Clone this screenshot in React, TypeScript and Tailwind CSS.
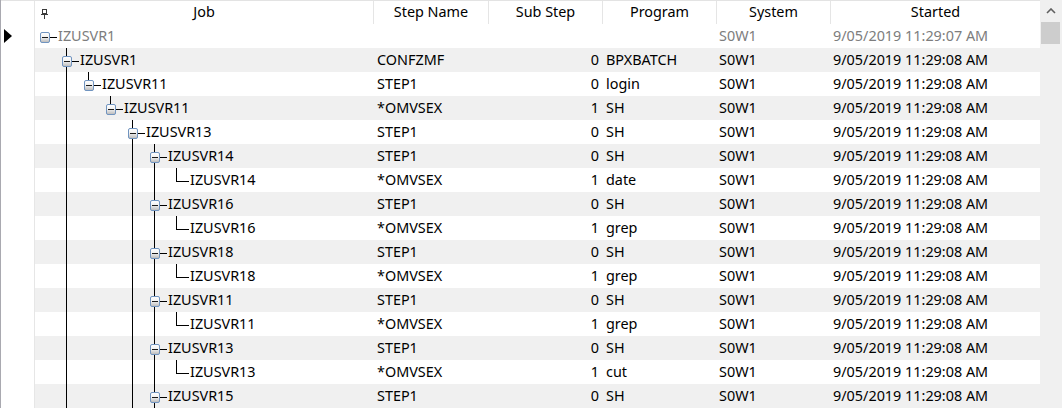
import React from "react";

type JobRow = {
  level: number;
  leaf?: boolean;
  more?: boolean; // has a sibling further down, below the visible rows
  dim?: boolean;
  name: string;
  step: string;
  sub: string;
  program: string;
  system: string;
  started: string;
};

const T8 = "9/05/2019 11:29:08 AM";

const rows: JobRow[] = [
  { level: 0, dim: true, name: "IZUSVR1", step: "", sub: "", program: "", system: "S0W1", started: "9/05/2019 11:29:07 AM" },
  { level: 1, more: true, name: "IZUSVR1", step: "CONFZMF", sub: "0", program: "BPXBATCH", system: "S0W1", started: T8 },
  { level: 2, name: "IZUSVR11", step: "STEP1", sub: "0", program: "login", system: "S0W1", started: T8 },
  { level: 3, name: "IZUSVR11", step: "*OMVSEX", sub: "1", program: "SH", system: "S0W1", started: T8 },
  { level: 4, more: true, name: "IZUSVR13", step: "STEP1", sub: "0", program: "SH", system: "S0W1", started: T8 },
  { level: 5, name: "IZUSVR14", step: "STEP1", sub: "0", program: "SH", system: "S0W1", started: T8 },
  { level: 6, leaf: true, name: "IZUSVR14", step: "*OMVSEX", sub: "1", program: "date", system: "S0W1", started: T8 },
  { level: 5, name: "IZUSVR16", step: "STEP1", sub: "0", program: "SH", system: "S0W1", started: T8 },
  { level: 6, leaf: true, name: "IZUSVR16", step: "*OMVSEX", sub: "1", program: "grep", system: "S0W1", started: T8 },
  { level: 5, name: "IZUSVR18", step: "STEP1", sub: "0", program: "SH", system: "S0W1", started: T8 },
  { level: 6, leaf: true, name: "IZUSVR18", step: "*OMVSEX", sub: "1", program: "grep", system: "S0W1", started: T8 },
  { level: 5, name: "IZUSVR11", step: "STEP1", sub: "0", program: "SH", system: "S0W1", started: T8 },
  { level: 6, leaf: true, name: "IZUSVR11", step: "*OMVSEX", sub: "1", program: "grep", system: "S0W1", started: T8 },
  { level: 5, name: "IZUSVR13", step: "STEP1", sub: "0", program: "SH", system: "S0W1", started: T8 },
  { level: 6, leaf: true, name: "IZUSVR13", step: "*OMVSEX", sub: "1", program: "cut", system: "S0W1", started: T8 },
  { level: 5, more: true, name: "IZUSVR15", step: "STEP1", sub: "0", program: "SH", system: "S0W1", started: T8 },
];

const hasNextSibling = (i: number) => {
  const lvl = rows[i].level;
  for (let j = i + 1; j < rows.length; j++) {
    if (rows[j].level < lvl) return false;
    if (rows[j].level === lvl) return true;
  }
  return !!rows[i].more;
};

// vertical rails of ancestors that still have siblings to come
const railsFor = (i: number) => {
  const out: number[] = [];
  for (let m = 1; m < rows[i].level; m++) {
    for (let k = i - 1; k >= 0; k--) {
      if (rows[k].level === m) {
        if (hasNextSibling(k)) out.push(m);
        break;
      }
    }
  }
  return out;
};

const px = (l: number) => 9 + 22 * l;

const TreeGuide = ({ index }: { index: number }) => {
  const row = rows[index];
  const x = px(row.level);
  const next = hasNextSibling(index);
  const gid = `tg-${index}`;
  return (
    <svg width={x + 14} height={24} className="shrink-0" shapeRendering="crispEdges">
      <defs>
        <linearGradient id={gid} x1="0" y1="0" x2="0" y2="1">
          <stop offset="0" stopColor="#ffffff" />
          <stop offset="0.45" stopColor="#f2f2f2" />
          <stop offset="1" stopColor="#b8b8b8" />
        </linearGradient>
      </defs>
      {railsFor(index).map((m) => (
        <line key={m} x1={px(m) + 0.5} y1={0} x2={px(m) + 0.5} y2={24} stroke="#000" />
      ))}
      {row.level > 0 && (
        <line x1={x + 0.5} y1={0} x2={x + 0.5} y2={next ? 24 : 14} stroke="#000" />
      )}
      {row.leaf ? (
        <line x1={x} y1={13.5} x2={x + 13} y2={13.5} stroke="#000" />
      ) : (
        <>
          <line x1={x + 6} y1={13.5} x2={x + 13} y2={13.5} stroke="#000" />
          <rect x={x - 3.5} y={8.5} width={9} height={10} rx={1.5} fill={`url(#${gid})`} stroke="#7094c0" shapeRendering="auto" />
          <line x1={x - 2} y1={13.5} x2={x + 4} y2={13.5} stroke="#1a1a1a" />
        </>
      )}
    </svg>
  );
};

const headers = [
  { label: "Step Name", w: "w-[115px]" },
  { label: "Sub Step", w: "w-[114px]" },
  { label: "Program", w: "w-[114px]" },
  { label: "System", w: "w-[114px]" },
  { label: "Started", w: "w-[210px]" },
];

export default function App() {
  return (
    <div className="flex h-[408px] w-[1062px] overflow-hidden bg-white font-['Noto_Sans',sans-serif] text-[14.4px] leading-none text-black">
      <div className="flex w-[1040px] flex-col border-l border-[#a9a9b0]">
        {/* column headers */}
        <div className="flex h-[24px] shrink-0 border-t border-[#e3e3e3]">
          <div className="w-[34px] shrink-0 border-r border-[#e6e6e6]" />
          <div className="relative flex w-[338px] shrink-0 items-center justify-center">
            <svg width="7" height="10" viewBox="0 0 7 10" className="absolute left-[6px] top-[8px]">
              <rect x="1.5" y="0.5" width="4" height="4" fill="none" stroke="#3a3a3a" />
              <line x1="0" y1="5.5" x2="7" y2="5.5" stroke="#3a3a3a" />
              <line x1="3.5" y1="5" x2="3.5" y2="10" stroke="#3a3a3a" />
            </svg>
            Job
          </div>
          {headers.map((h) => (
            <div key={h.label} className={`flex ${h.w} shrink-0 items-center justify-center border-l border-[#e5e5e5]`}>
              {h.label}
            </div>
          ))}
        </div>

        {/* job tree rows */}
        {rows.map((r, i) => (
          <div key={i} className="flex h-[24px] shrink-0">
            <div className="flex w-[34px] shrink-0 items-center border-r border-[#e6e6e6] bg-white pl-[3px]">
              {i === 0 && (
                <svg width="9" height="14" viewBox="0 0 9 14">
                  <polygon points="0,0 8,7 0,14" fill="#000" />
                </svg>
              )}
            </div>
            <div
              className={`flex flex-1 items-center ${i % 2 === 1 ? "bg-[#f0f0f0]" : "bg-white"} ${r.dim ? "text-[#7d7d7d]" : "text-black"}`}
            >
              <div className="flex w-[338px] shrink-0 items-center">
                <TreeGuide index={i} />
                <span>{r.name}</span>
              </div>
              <div className="w-[115px] shrink-0 pl-[4px]">{r.step}</div>
              <div className="w-[114px] shrink-0 pr-[3px] text-right">{r.sub}</div>
              <div className="w-[114px] shrink-0 pl-[4px]">{r.program}</div>
              <div className="w-[114px] shrink-0 pl-[3px]">{r.system}</div>
              <div className="w-[210px] shrink-0 pl-[3px]">{r.started}</div>
            </div>
          </div>
        ))}
      </div>

      {/* vertical scrollbar */}
      <div className="flex w-[22px] shrink-0 flex-col bg-[#f0f0f0] pl-[1px] pr-[2px]">
        <div className="flex h-[22px] items-center justify-center">
          <svg width="10" height="6" viewBox="0 0 10 6">
            <polyline points="1,5 5,1 9,5" fill="none" stroke="#606060" strokeWidth="1.6" />
          </svg>
        </div>
        <div className="h-[22px] bg-[#cdcdcd]" />
      </div>
    </div>
  );
}
